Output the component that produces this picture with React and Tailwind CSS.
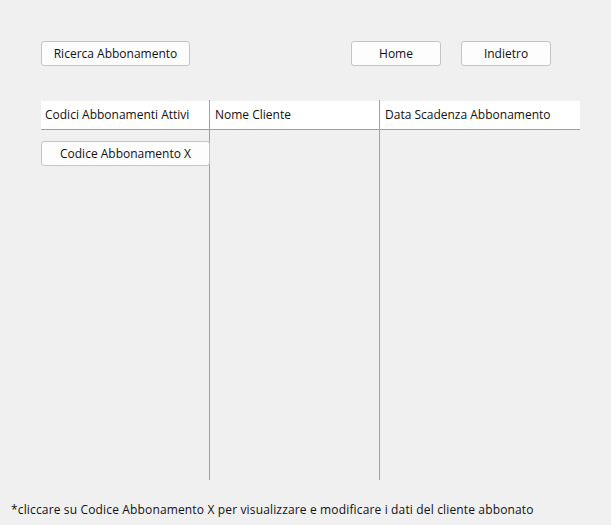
export default function App() {
  const font = { fontFamily: '"Open Sans", "Noto Sans", sans-serif' };
  const btn =
    "h-[25px] bg-[#fdfdfd] border border-[#c4c4c4] rounded-[3px] text-[12px] text-[#101010] flex items-center justify-center";
  return (
    <div
      className="w-[611px] h-[525px] bg-[#f0f0f0] flex flex-col text-[12px] text-[#101010]"
      style={font}
    >
      <div className="flex pt-[41px] pl-[41px]">
        <div className={btn + " w-[149px] pt-px"}>Ricerca Abbonamento</div>
        <div className={btn + " w-[90px] ml-[161px] pt-px"}>Home</div>
        <div className={btn + " w-[90px] ml-[20px] pt-px"}>Indietro</div>
      </div>
      <div className="flex pl-[41px] mt-[34px]">
        <div className="w-[168px] flex flex-col pt-px">
          <div className="h-[29px] bg-white border-b border-[#a0a0a0] flex items-center pl-[4px]">
            Codici Abbonamenti Attivi
          </div>
          <div className={btn + " mt-[11px] w-[169px] relative z-10 pt-px"}>Codice Abbonamento X</div>
        </div>
        <div className="w-px h-[380px] bg-[#a0a0a0]" />
        <div className="w-[169px] flex flex-col pt-px">
          <div className="h-[29px] bg-white border-b border-[#a0a0a0] flex items-center pl-[5px]">
            Nome Cliente
          </div>
        </div>
        <div className="w-px h-[380px] bg-[#a0a0a0]" />
        <div className="w-[200px] flex flex-col pt-px">
          <div className="h-[29px] bg-white border-b border-[#a0a0a0] flex items-center pl-[5px]">
            Data Scadenza Abbonamento
          </div>
        </div>
      </div>
      <div className="pl-[11px] mt-[22px] leading-[16px] tracking-[0.15px]">
        *cliccare su Codice Abbonamento X per visualizzare e modificare i dati del cliente abbonato
      </div>
    </div>
  );
}
